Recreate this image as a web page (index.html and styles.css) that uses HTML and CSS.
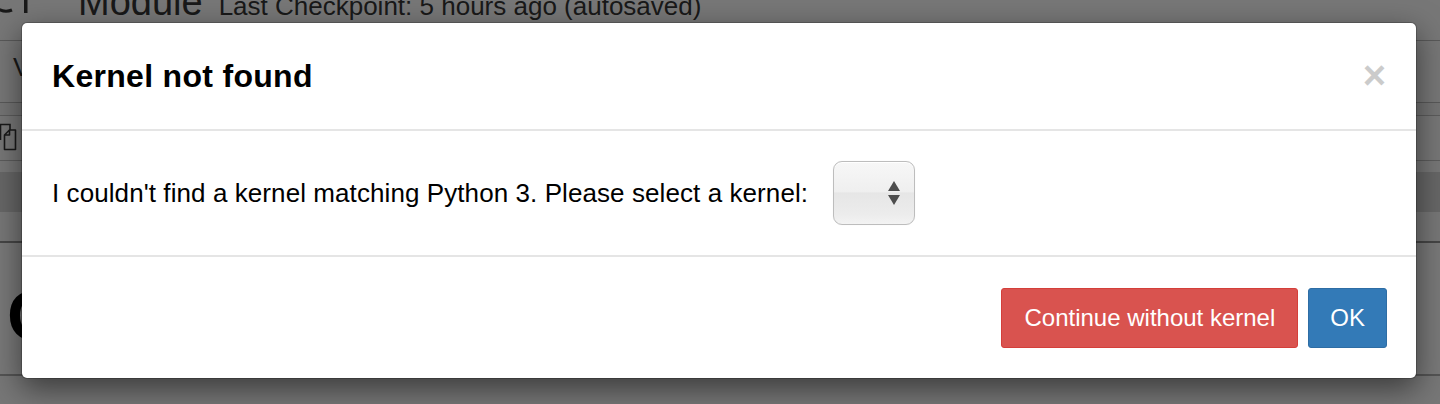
FILE: index.html
```html
<!DOCTYPE html>
<html lang="en">
<head>
<meta charset="utf-8">
<title>Kernel not found</title>
<link rel="stylesheet" href="styles.css">
</head>
<body>
<div class="page">
  <header class="nb-header">
    <svg class="logo" width="30" height="16" viewBox="0 0 30 16" aria-hidden="true">
      <path d="M-2 9 Q5 13 12 10" fill="none" stroke="#333" stroke-width="3"/>
      <rect x="24" y="0" width="3.5" height="13" fill="#333"/>
    </svg>
    <div class="nb-title">
      <span class="nb-name">Module</span>
      <span class="nb-checkpoint">Last Checkpoint: 5 hours ago (autosaved)</span>
    </div>
  </header>
  <nav class="menubar"><span class="menu-item">V</span></nav>
  <div class="strip"></div>
  <div class="toolbar">
    <svg class="copy-icon" width="18" height="28" viewBox="0 0 18 28" aria-hidden="true">
      <path d="M1.5 17 V1.5 H11 V7" fill="none" stroke="#333" stroke-width="1.6"/>
      <path d="M5.5 12 L10.5 7 H16.5 V26.5 H5.5 Z M5.5 12 H10.5 V7" fill="none" stroke="#333" stroke-width="1.6" stroke-linejoin="round"/>
    </svg>
  </div>
  <div class="gap"></div>
  <div class="band"></div>
  <div class="cell-gap"></div>
  <div class="cell"><span class="heading">O</span></div>
  <div class="rest"></div>
</div>

<div class="backdrop"></div>

<div class="modal" role="dialog" aria-labelledby="modal-title">
  <div class="modal-header">
    <h4 class="modal-title" id="modal-title">Kernel not found</h4>
    <button class="close" type="button" aria-label="Close">×</button>
  </div>
  <div class="modal-body">
    <p class="message">I couldn't find a kernel matching Python 3. Please select a kernel:</p>
    <div class="kernel-select">
      <svg width="12" height="24" viewBox="0 0 12 24" aria-hidden="true">
        <path d="M6 0 L12 10 H0 Z" fill="#4d4d4d"/>
        <path d="M0 14 H12 L6 24 Z" fill="#4d4d4d"/>
      </svg>
    </div>
  </div>
  <div class="modal-footer">
    <button class="btn btn-danger" type="button">Continue without kernel</button>
    <button class="btn btn-primary" type="button">OK</button>
  </div>
</div>
</body>
</html>
```

FILE: styles.css
```css
* {
  box-sizing: border-box;
}

html, body {
  margin: 0;
  padding: 0;
  width: 1440px;
  height: 404px;
  overflow: hidden;
}

body {
  font-family: "Liberation Sans", Arial, Helvetica, sans-serif;
  color: #000;
  background: #eeeeee;
  position: relative;
}

/* ---------- dimmed notebook underneath ---------- */
.page {
  width: 1440px;
  height: 404px;
  background: #eeeeee;
}

.nb-header {
  height: 41px;
  display: flex;
  overflow: hidden;
  border-bottom: 1px solid #b2b2b2;
  background: #efefef;
}

.logo {
  flex: none;
  align-self: flex-start;
}

.nb-title {
  display: flex;
  align-items: baseline;
  gap: 16px;
  margin-top: -18px;
  margin-left: 48px;
  color: #333;
  white-space: nowrap;
}

.nb-name {
  font-size: 38px;
  line-height: 40px;
}

.nb-checkpoint {
  font-size: 26px;
  line-height: 40px;
}

.menubar {
  height: 62px;
  padding: 13px 0 0 13px;
  border-bottom: 1px solid #b2b2b2;
  background: #eeeeee;
}

.menu-item {
  font-size: 26px;
  line-height: 26px;
  color: #333;
}

.strip {
  height: 13px;
  border-bottom: 1px solid #b8b8b8;
  background: #e9e9e9;
}

.toolbar {
  height: 45px;
  padding-top: 7px;
  border-bottom: 1px solid #b8b8b8;
  background: #eeeeee;
}

.copy-icon {
  display: block;
  margin-left: -1px;
}

.gap {
  height: 11px;
  background: #eeeeee;
}

.band {
  height: 40px;
  background: #cfcfcf;
}

.cell-gap {
  height: 31px;
  border-bottom: 2px solid #8c8c8c;
  background: #eeeeee;
}

.cell {
  height: 133px;
  padding: 38px 0 0 7px;
  border-bottom: 2px solid #a8a8a8;
  background: #f2f2f2;
}

.heading {
  font-size: 70px;
  line-height: 70px;
  font-weight: 700;
  color: #000;
}

.rest {
  height: 40px;
  background: #eeeeee;
}

.backdrop {
  position: absolute;
  inset: 0;
  background: rgba(0, 0, 0, 0.5);
}

/* ---------- modal ---------- */
.modal {
  position: absolute;
  top: 22px;
  left: 21px;
  width: 1396px;
  background: #fff;
  border: 1px solid rgba(0, 0, 0, 0.2);
  border-radius: 6px;
  background-clip: padding-box;
  box-shadow: 0 10px 30px rgba(0, 0, 0, 0.5);
}

.modal-header {
  display: flex;
  align-items: center;
  justify-content: space-between;
  padding: 30px 30px 30px 30px;
  border-bottom: 2px solid #e5e5e5;
}

.modal-title {
  margin: 0;
  font-size: 32px;
  line-height: 46px;
  font-weight: 700;
  letter-spacing: 0.3px;
  color: #000;
}

.close {
  margin: -2px 0 0 0;
  padding: 0;
  border: 0;
  background: transparent;
  font-family: "Liberation Sans", Arial, sans-serif;
  font-size: 40px;
  line-height: 46px;
  font-weight: 700;
  color: #000;
  opacity: 0.2;
  cursor: pointer;
}

.modal-body {
  display: flex;
  align-items: center;
  gap: 25px;
  padding: 30px;
}

.message {
  margin: 0;
  font-size: 26px;
  line-height: 37px;
  letter-spacing: 0.08px;
  color: #000;
}

.kernel-select {
  width: 82px;
  height: 64px;
  display: flex;
  align-items: center;
  justify-content: flex-end;
  padding-right: 14px;
  border: 1px solid #bdbdbd;
  border-radius: 9px;
  background: linear-gradient(to bottom, #f7f7f7 0%, #efefef 48%, #e6e6e6 50%, #ececec 85%, #f3f3f3 100%);
  box-shadow: inset 0 1px 0 #ffffff, 0 0 1px rgba(0, 0, 0, 0.1);
}

.modal-footer {
  display: flex;
  justify-content: flex-end;
  gap: 10px;
  padding: 31px 29px 30px 30px;
  border-top: 2px solid #e5e5e5;
}

.btn {
  height: 60px;
  padding: 0 22px;
  border: 1px solid transparent;
  border-radius: 3px;
  font-family: "Liberation Sans", Arial, sans-serif;
  font-size: 24px;
  line-height: 58px;
  color: #fff;
  cursor: pointer;
}

.btn-danger {
  background: #d9534f;
  border-color: #d43f3a;
}

.btn-primary {
  padding: 0 21px;
  background: #337ab7;
  border-color: #2e6da4;
}
```
